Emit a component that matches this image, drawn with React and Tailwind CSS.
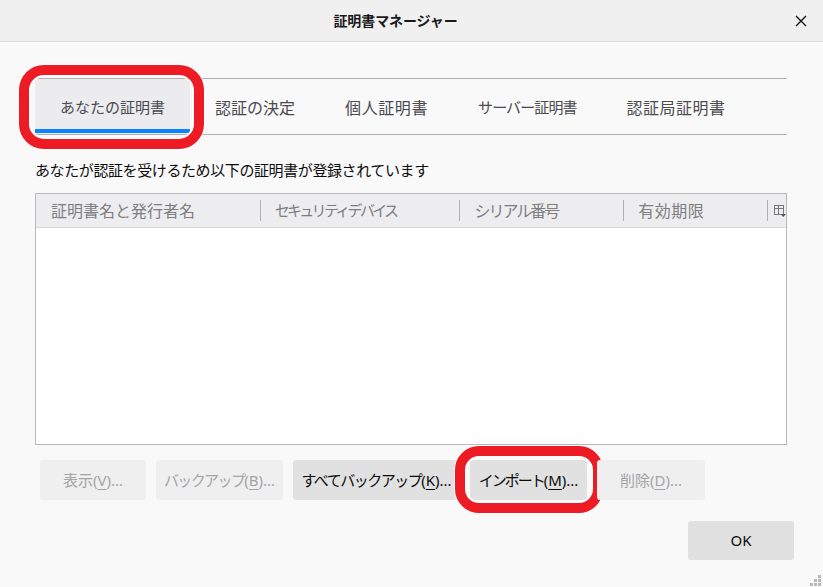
import React from "react";

const font = { fontFamily: '"Noto Sans", "Noto Sans CJK JP", sans-serif' };

function Btn({ w, disabled, jp, k, ring, tr }) {
  return (
    <div className={`relative ${w}`}>
      <button
        className={`w-full h-[40px] rounded-[3px] text-[15px] flex items-center justify-center ${
          disabled ? "bg-[#efeff0] text-[#a4a4a6]" : "bg-[#e1e1e2] text-[#0c0c0d]"
        }`}
      >
        <span className={tr}>{jp}</span>
        <span>
          (<span className="underline underline-offset-[3px] decoration-1">{k}</span>)...
        </span>
      </button>
      {ring && (
        <div className="absolute left-[-15px] right-[-16px] top-[-14px] bottom-[-13px] border-[10px] border-[#ed1c24] rounded-[24px] shadow-[inset_0_0_0_2px_white,0_0_0_1px_white] pointer-events-none" />
      )}
    </div>
  );
}

export default function App() {
  const tabs = [
    { t: "認証の決定", c: "text-[16px]" },
    { t: "個人証明書", c: "text-[16px] tracking-[0.6px]" },
    { t: "サーバー証明書", c: "text-[15px] tracking-[-0.9px]" },
    { t: "認証局証明書", c: "text-[16px] tracking-[0.5px]" },
  ];
  const cols = [
    { label: "証明書名と発行者名", w: "w-[224px]", pl: "pl-[15px]", tr: "text-[16px]" },
    { label: "セキュリティデバイス", w: "w-[200px]", pl: "pl-[14px]", tr: "text-[15px] tracking-[-2.7px]" },
    { label: "シリアル番号", w: "w-[164px]", pl: "pl-[14px]", tr: "text-[16px] tracking-[-2px]" },
    { label: "有効期限", w: "w-[144px]", pl: "pl-[14px]", tr: "text-[16px] tracking-[0.5px]" },
  ];
  return (
    <div className="w-[823px] h-[587px] bg-[#f9f9fa] relative flex flex-col overflow-hidden" style={font}>
      {/* Title bar */}
      <div className="h-[42px] bg-[#f0f0f0] border-b border-[#dcdcdc] grid grid-cols-[1fr_auto_1fr] items-center">
        <div />
        <div className="text-[14px] font-bold text-[#1a1a1a] tracking-[-0.1px] pr-[32px]">証明書マネージャー</div>
        <div className="flex justify-end pr-[16px]">
          <svg width="12" height="12" viewBox="0 0 12 12">
            <path d="M1 1 L11 11 M11 1 L1 11" stroke="#111" strokeWidth="1.4" />
          </svg>
        </div>
      </div>

      <div className="pl-[35px] pr-[36px] pt-[36px] flex flex-col">
        {/* Tabs */}
        <div className="flex border-y border-[#b1b1b3] h-[57px]">
          <div className="relative bg-[#ececee] px-[25px] flex items-center justify-center text-[15px] text-[#4a4a4f]">
            <span className="pt-[2px]">あなたの証明書</span>
            <div className="absolute left-0 right-0 bottom-[1px] h-[4px] bg-[#0a84ff]" />
            <div className="absolute left-[-16px] right-[-14px] top-[-14px] bottom-[-15px] border-[10px] border-[#ed1c24] rounded-[25px] shadow-[inset_0_0_0_2px_white,0_0_0_1px_white] pointer-events-none" />
          </div>
          {tabs.map((t) => (
            <div key={t.t} className={`px-[25px] flex items-center text-[#4a4a4f] ${t.c}`}>
              <span className="pt-[2px]">{t.t}</span>
            </div>
          ))}
        </div>

        <div className="mt-[24px] text-[15px] leading-[22px] text-[#0c0c0d] tracking-[-0.4px]">
          あなたが認証を受けるため以下の証明書が登録されています
        </div>

        {/* Table */}
        <div className="mt-[12px] h-[252px] border border-[#b9b9bb] bg-white flex flex-col">
          <div className="h-[34px] bg-[#ededf0] border-b border-[#d7d7db] flex items-center">
            {cols.map((c, i) => (
              <div key={c.label} className={`${c.w} h-full flex items-center`}>
                {i > 0 && <div className="w-px h-[21px] bg-[#b1b1b3]" />}
                <span className={`${c.pl} ${c.tr} text-[#7e7e80] whitespace-nowrap`}>{c.label}</span>
              </div>
            ))}
            <div className="flex-1 h-full flex items-center">
              <div className="w-px h-[21px] bg-[#b1b1b3]" />
              <svg width="12" height="13" viewBox="0 0 12 13" className="ml-[6px] mt-[1px]">
                <rect x="0.5" y="0.5" width="9" height="9" fill="none" stroke="#777" />
                <path d="M0.5 3.5 H9.5 M4.5 0.5 V9.5" stroke="#777" />
                <path d="M6.5 9 H12 L9.25 12 Z" fill="#555" />
              </svg>
            </div>
          </div>
          <div className="flex-1" />
        </div>

        {/* Buttons */}
        <div className="mt-[15px] pl-[5px] flex gap-[10px]">
          <Btn w="w-[106px]" disabled jp="表示" k="V" />
          <Btn w="w-[127px]" disabled jp="バックアップ" k="B" tr="tracking-[-1.6px]" />
          <Btn w="w-[167px]" jp="すべてバックアップ" k="K" tr="tracking-[-1.5px]" />
          <Btn w="w-[117px]" ring jp="インポート" k="M" tr="tracking-[-2px]" />
          <Btn w="w-[108px]" disabled jp="削除" k="D" />
        </div>

        <div className="mt-[21px] mr-[-7px] flex justify-end">
          <button className="w-[106px] h-[39px] rounded-[3px] bg-[#e1e1e2] text-[15px] text-[#0c0c0d]">OK</button>
        </div>
      </div>

      {/* resize grip */}
      <div className="absolute right-[2px] bottom-[1px] grid grid-cols-3 gap-[1px]">
        <span className="w-[3px] h-[3px]" />
        <span className="w-[3px] h-[3px]" />
        <span className="w-[3px] h-[3px] bg-[#b8b8b8]" />
        <span className="w-[3px] h-[3px]" />
        <span className="w-[3px] h-[3px] bg-[#b8b8b8]" />
        <span className="w-[3px] h-[3px] bg-[#b8b8b8]" />
        <span className="w-[3px] h-[3px] bg-[#b8b8b8]" />
        <span className="w-[3px] h-[3px] bg-[#b8b8b8]" />
        <span className="w-[3px] h-[3px] bg-[#b8b8b8]" />
      </div>
    </div>
  );
}
